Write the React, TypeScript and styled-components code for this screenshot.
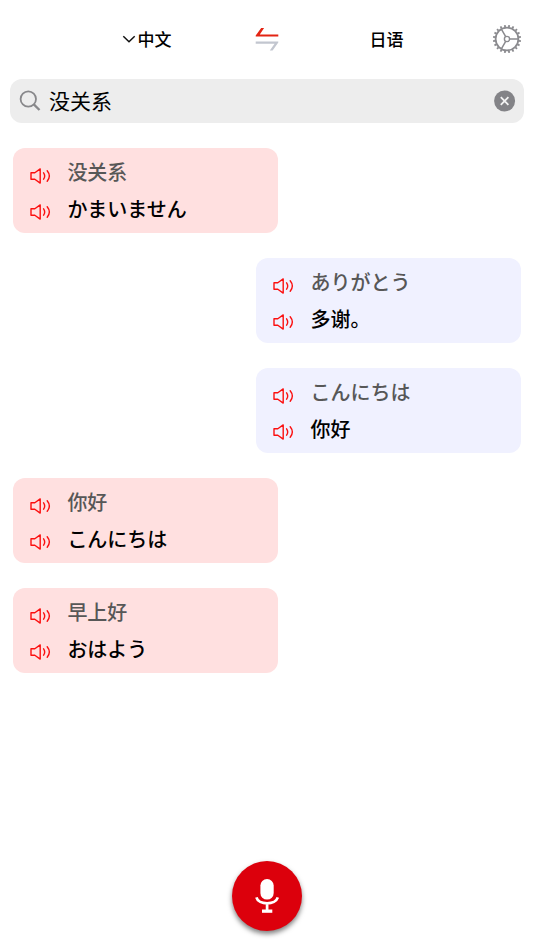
import React from "react";
import styled, { createGlobalStyle } from "styled-components";

const GlobalStyle = createGlobalStyle`
  *, *::before, *::after { box-sizing: border-box; }
  body { margin: 0; background: #fff; }
  svg { display: block; flex: none; }
`;

const SANS_SC = `"Noto Sans CJK SC", sans-serif`;
const SANS_JP = `"Noto Sans CJK JP", sans-serif`;

const Screen = styled.div`
  width: 100%;
  height: 950px;
  display: flex;
  flex-direction: column;
  overflow: hidden;
  background: #fff;
  font-family: ${SANS_SC};
`;

const Header = styled.header`
  display: grid;
  grid-template-columns: 241px 52px 187px 53px;
  height: 79px;
  padding-bottom: 2px;
  align-items: center;
`;

const LanguageButton = styled.div<{ $indent: number; $gap?: number }>`
  display: flex;
  align-items: center;
  gap: ${(p) => p.$gap ?? 0}px;
  padding-left: ${(p) => p.$indent}px;
  font-size: 17px;
  line-height: 24px;
  font-weight: 500;
  color: #000;
`;

const IconSlot = styled.div`
  display: flex;
  justify-content: center;
`;

const SearchBar = styled.div`
  display: flex;
  align-items: center;
  height: 44px;
  margin: 0 10px;
  padding: 0 8px 0 9px;
  border-radius: 12px;
  background: #ededed;
`;

const Query = styled.div`
  flex: 1;
  margin: -2px 0 0 8px;
  font-size: 21px;
  line-height: 30px;
  color: #000;
`;

const Conversation = styled.main`
  flex: 1;
  display: flex;
  flex-direction: column;
  gap: 25px;
  padding: 25.3px 12.7px 0;
`;

const Bubble = styled.article<{ $mine: boolean }>`
  display: flex;
  flex-direction: column;
  align-self: ${(p) => (p.$mine ? "flex-start" : "flex-end")};
  width: 265.5px;
  height: 85px;
  padding: 9.2px 17px 0;
  border-radius: 12px;
  background: ${(p) => (p.$mine ? "#ffe0e0" : "#f0f1ff")};
`;

const Line = styled.div`
  display: flex;
  align-items: center;
  height: 36.3px;
`;

const Phrase = styled.span<{ $jp: boolean; $strong?: boolean }>`
  margin: -6.6px 0 0 16.7px;
  font-family: ${(p) => (p.$jp ? SANS_JP : SANS_SC)};
  font-size: 20px;
  line-height: 30px;
  font-weight: 500;
  white-space: nowrap;
  color: ${(p) => (p.$strong ? "#000" : "#575757")};
`;

const Footer = styled.footer`
  display: flex;
  justify-content: center;
  padding-bottom: 19px;
`;

const MicButton = styled.div`
  display: flex;
  align-items: center;
  justify-content: center;
  width: 70px;
  height: 70px;
  border-radius: 50%;
  background: #dc000c;
  box-shadow: 0 3px 5px rgba(0, 0, 0, 0.5);
`;

const Chevron = () => (
  <svg width="14" height="10" viewBox="0 0 14 10" fill="none" stroke="#111" strokeWidth="1.5">
    <path d="M1.3 2.2 7 7.7 12.7 2.2" />
  </svg>
);

const SwapIcon = () => (
  <svg width="24" height="24" viewBox="0 0 24 24">
    <path d="M6.2 1H9.1L4.8 7.4H23.3V9.5H.7V8.4Z" fill="#e32413" />
    <path d="M.7 14.5H23.3V15.6L17.6 23.4H14.8L19.6 16.7H.7Z" fill="#c2c6cf" />
  </svg>
);

const teeth = Array.from({ length: 20 }, (_, i) => i * 18 + 9);

const GearIcon = () => (
  <svg width="30" height="30" viewBox="-15 -15 30 30" fill="none" stroke="#8b8b8f">
    <circle r="11.4" strokeWidth="1.8" />
    <circle r="2.6" strokeWidth="1.4" />
    <path d="M2.6 0H11M-1.3 2.3-5.5 9.6M-1.3-2.3-5.5-9.6" strokeWidth="1.5" />
    {teeth.map((a) => (
      <path key={a} d="M12 0H14.1" strokeWidth="1.8" transform={`rotate(${a})`} />
    ))}
  </svg>
);

const SearchIcon = () => (
  <svg width="22" height="22" viewBox="0 0 22 22" fill="none" stroke="#88888b">
    <circle cx="9.3" cy="9" r="7.7" strokeWidth="1.8" />
    <path d="m14.8 14.4 5.7 5.6" strokeWidth="2.3" />
  </svg>
);

const ClearIcon = () => (
  <svg width="22" height="22" viewBox="0 0 22 22">
    <circle cx="10.6" cy="11" r="10.5" fill="#838387" />
    <path d="m6.8 7.2 7.6 7.6m0-7.6-7.6 7.6" stroke="#f3f3f3" strokeWidth="1.8" />
  </svg>
);

const SpeakerIcon = () => (
  <svg
    width="21"
    height="16"
    viewBox="0 0 21 16"
    fill="none"
    stroke="#fb1010"
    strokeWidth="1.4"
    strokeLinejoin="round"
    strokeLinecap="round"
  >
    <path d="M1 4.7H4.8L10.2.9V15.1L4.8 11.3H1Z" />
    <path d="M13.6 4.8Q15.8 8 13.6 11.2M17.2 2.8Q21.5 8 17.2 13.2" />
  </svg>
);

const MicIcon = () => (
  <svg width="24" height="36" viewBox="0 0 24 36">
    <rect x="5.4" y="1" width="13.3" height="20.6" rx="6.6" fill="#fff" />
    <path d="M1.4 19.4C3.4 27.3 20.8 27.3 22.8 19.4M12.1 25.4V32" fill="none" stroke="#fff" strokeWidth="2.7" />
    <path d="M7 31.5H17.3V34.8H7Z" fill="#fff" />
  </svg>
);

interface Message {
  source: string;
  result: string;
  mine: boolean;
}

const messages: Message[] = [
  { source: "没关系", result: "かまいません", mine: true },
  { source: "ありがとう", result: "多谢。", mine: false },
  { source: "こんにちは", result: "你好", mine: false },
  { source: "你好", result: "こんにちは", mine: true },
  { source: "早上好", result: "おはよう", mine: true },
];

export default function App() {
  return (
    <>
      <GlobalStyle />
      <Screen>
        <Header>
          <LanguageButton $indent={122} $gap={1.5}>
            <Chevron />
            中文
          </LanguageButton>
          <IconSlot>
            <SwapIcon />
          </IconSlot>
          <LanguageButton $indent={76.5}>日语</LanguageButton>
          <IconSlot>
            <GearIcon />
          </IconSlot>
        </Header>
        <SearchBar>
          <SearchIcon />
          <Query>没关系</Query>
          <ClearIcon />
        </SearchBar>
        <Conversation>
          {messages.map((m) => (
            <Bubble key={m.source} $mine={m.mine}>
              <Line>
                <SpeakerIcon />
                <Phrase $jp={!m.mine}>{m.source}</Phrase>
              </Line>
              <Line>
                <SpeakerIcon />
                <Phrase $jp={m.mine} $strong>
                  {m.result}
                </Phrase>
              </Line>
            </Bubble>
          ))}
        </Conversation>
        <Footer>
          <MicButton>
            <MicIcon />
          </MicButton>
        </Footer>
      </Screen>
    </>
  );
}
